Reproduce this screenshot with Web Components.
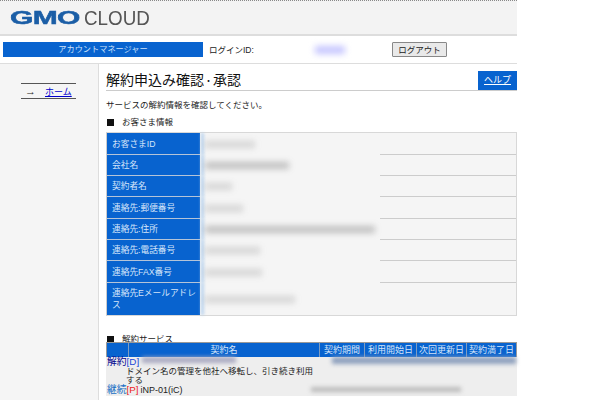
<!DOCTYPE html>
<html lang="ja">
<head>
<meta charset="utf-8">
<title>解約申込み確認・承認</title>
<style>
  html, body { margin: 0; height: 400px; overflow: hidden; background: #fff; }
  body { font: 8.5px/12px "Liberation Sans", "Noto Sans CJK JP", sans-serif; color: #222; }
</style>
</head>
<body>
<site-header></site-header>
<account-bar></account-bar>
<page-body>
  <side-menu slot="side"></side-menu>
  <page-title>解約申込み確認<span style="font-size:9px;vertical-align:1px">・</span>承認</page-title>
  <p style="margin:8px 0 0;height:13px;line-height:13px">サービスの解約情報を確認してください。</p>
  <section-head style="margin-top:4px">お客さま情報</section-head>
  <info-table style="margin-top:4px">
    <info-row label="お客さまID" w="50" h="22"></info-row>
    <info-row label="会社名" w="84" h="21" dark></info-row>
    <info-row label="契約者名" w="27" h="21"></info-row>
    <info-row label="連絡先:郵便番号" w="38" h="22"></info-row>
    <info-row label="連絡先:住所" w="170" h="21" dark></info-row>
    <info-row label="連絡先:電話番号" w="55" h="21"></info-row>
    <info-row label="連絡先FAX番号" w="57" h="22"></info-row>
    <info-row label="連絡先Eメールアドレス" w="90" h="32" last></info-row>
  </info-table>
  <section-head style="margin-top:17px">解約サービス</section-head>
  <service-table></service-table>
</page-body>

<script>
class SiteHeader extends HTMLElement {
  constructor() {
    super()
    this.attachShadow({ mode: 'open' }).innerHTML = `
      <style>
        :host { display: flex; box-sizing: border-box; width: 517px; height: 36px; padding: 1px 0 0 10px;
          align-items: center; background: #f3f3f3; border-top: 1px dotted #888; border-bottom: 2px solid #ddd; }
        .gmo { font: 700 18.5px/1 "Liberation Sans", sans-serif; color: #1b5ea6;
          display: inline-block; width: 74px; transform: scaleX(1.62); transform-origin: left center;
          -webkit-text-stroke: .5px #1b5ea6; letter-spacing: -.4px; }
        .cloud { font: 20px/1 "Liberation Sans", sans-serif; color: #555;
          display: inline-block; transform: scaleX(.94); transform-origin: left center; }
      </style>
      <span class="gmo">GMO</span><span class="cloud">CLOUD</span>`
  }
}

class AccountBar extends HTMLElement {
  constructor() {
    super()
    this.attachShadow({ mode: 'open' }).innerHTML = `
      <style>
        :host { display: flex; box-sizing: border-box; width: 517px; height: 28px; padding-left: 3px;
          align-items: center; border-bottom: 1px solid #ddd; }
        .name { width: 200px; height: 15px; background: #0863cf; color: #cfe2fa; text-align: center; line-height: 15px; font-size: 8.2px; }
        .login { margin-left: 6px; width: 106px; }
        .id { width: 30px; height: 8px; background: #c6c6ff; filter: blur(3px); }
        button { margin-left: 47px; box-sizing: border-box; width: 55px; height: 15px; padding: 0; font: inherit;
          color: #222; line-height: 12px; background: #e9e9e9; border: 1px solid #888; border-radius: 1px; }
      </style>
      <span class="name">アカウントマネージャー</span>
      <span class="login">ログインID:</span>
      <span class="id"></span>
      <button>ログアウト</button>`
  }
}

class PageBody extends HTMLElement {
  constructor() {
    super()
    this.attachShadow({ mode: 'open' }).innerHTML = `
      <style>
        :host { display: flex; width: 517px; height: 336px; }
        aside { box-sizing: border-box; width: 99px; flex: none; background: #f5f5f5; border-right: 1px solid #ddd; }
        main { flex: 1; min-width: 0; padding: 7px 0 0 7px; }
      </style>
      <aside><slot name="side"></slot></aside>
      <main><slot></slot></main>`
  }
}

class SideMenu extends HTMLElement {
  constructor() {
    super()
    this.attachShadow({ mode: 'open' }).innerHTML = `
      <style>
        :host { display: block; box-sizing: border-box; width: 55px; height: 16px; margin: 19px 0 0 21px;
          border-top: 1px solid #555; border-bottom: 1px solid #555; line-height: 14px; white-space: nowrap; font-size: 9px; }
        span { margin: 0 9px 0 4px; font-size: 11px; }
        a { color: #00c; text-decoration: underline; }
      </style>
      <span>→</span><a href="#">ホーム</a>`
  }
}

class PageTitle extends HTMLElement {
  constructor() {
    super()
    this.attachShadow({ mode: 'open' }).innerHTML = `
      <style>
        :host { display: flex; justify-content: space-between; height: 19px; border-bottom: 1px solid #ccc; }
        h1 { margin: 0; font-size: 14px; font-weight: 400; line-height: 18px; color: #111; }
        a { width: 39px; height: 19px; background: #0863cf; color: #fff; text-align: center; line-height: 18px; font-size: 9px; }
      </style>
      <h1><slot></slot></h1>
      <a href="#">ヘルプ</a>`
  }
}

class SectionHead extends HTMLElement {
  constructor() {
    super()
    this.attachShadow({ mode: 'open' }).innerHTML = `
      <style>
        :host { display: flex; align-items: center; height: 12px; gap: 8px; line-height: 12px; }
        i { width: 7px; height: 7px; background: #111; margin-left: 1px; }
      </style>
      <i></i><span><slot></slot></span>`
  }
}

class InfoTable extends HTMLElement {
  constructor() {
    super()
    this.attachShadow({ mode: 'open' }).innerHTML = `
      <style>
        :host { display: block; box-sizing: border-box; width: 411px; border: 1px solid #d8d8d8; border-left-color: #ccc; background: #f5f5f5; }
      </style>
      <slot></slot>`
  }
}

class InfoRow extends HTMLElement {
  constructor() {
    super()
    const h = this.getAttribute('h')
    const w = this.getAttribute('w')
    const last = this.hasAttribute('last')
    const dark = this.hasAttribute('dark') ? .3 : .18
    this.attachShadow({ mode: 'open' }).innerHTML = `
      <style>
        :host { display: flex; height: ${h}px; }
        .label { box-sizing: border-box; width: 93px; flex: none; display: flex; align-items: center; padding: 0 3px 0 5px;
          background: #0863cf; color: #d5e5fa; line-height: 12px; font-size: 8.7px; ${last ? '' : 'border-bottom: 1px solid #b5c4d8;'} }
        .value { flex: 1; position: relative; display: flex; align-items: center; padding-left: 4px;
          ${last ? '' : 'background: linear-gradient(#ccc,#ccc) right bottom / 136px 1px no-repeat;'} }
        .value::before { content: ""; position: absolute; left: 1px; top: 0; bottom: 0; width: 3px; background: #bcd4ee; filter: blur(1.5px); }
        .blur { width: ${w}px; height: 7px; background: rgba(70,70,70,${dark}); filter: blur(3px); margin-left: 1px; }
      </style>
      <div class="label">${this.getAttribute('label')}</div>
      <div class="value"><span class="blur"></span></div>`
  }
}

class ServiceTable extends HTMLElement {
  constructor() {
    super()
    this.attachShadow({ mode: 'open' }).innerHTML = `
      <style>
        :host { display: block; width: 411px; margin-top: -3px; height: 54px; background: #eee; position: relative; }
        .head { display: grid; grid-template-columns: 21px 191px 45px 52px 50px 1fr; height: 15px;
          box-sizing: border-box; border: 1px solid #999; border-bottom: 0; background: #0863cf; font-size: 9px; }
        .head span { color: #d5e5fa; text-align: center; line-height: 14px; border-left: 1px solid #7f9dc0; white-space: nowrap; overflow: hidden; }
        .head span:first-child { border-left: 0; }
        .one { height: 10px; line-height: 10px; font-size: 9.8px; padding-left: 1px; }
        .one .st { color: #00008b; white-space: nowrap; }
        .st em { font-style: normal; color: #1c46d8; }
        .desc { margin: 0 0 0 20px; width: 190px; height: 17px; line-height: 9px; color: #222; }
        .two { display: flex; height: 12px; padding-left: 1px; align-items: center; white-space: nowrap; font-size: 9.8px; }
        .two b { font-weight: 400; color: #1a6fc4; }
        .two em { font-style: normal; color: #e22; }
        .two span { margin-left: 2px; font-size: 9px; }
        .b { position: absolute; filter: blur(2px); }
      </style>
      <div class="head"><span></span><span>契約名</span><span>契約期間</span><span>利用開始日</span><span>次回更新日</span><span>契約満了日</span></div>
      <div class="one"><span class="st">解約<em>[D]</em></span></div>
      <p class="desc">ドメイン名の管理を他社へ移転し、引き続き利用する</p>
      <div class="two"><b>継続</b><em>[P]</em><span>iNP-01(iC)</span></div>
      <i class="b" style="left:36px;top:15px;width:94px;height:6px;background:#a8a8c0"></i>
      <i class="b" style="left:226px;top:15px;width:184px;height:7px;background:#8ea0bd"></i>
      <i class="b" style="left:205px;top:45px;width:150px;height:5px;background:#bbb"></i>`
  }
}

customElements.define('site-header', SiteHeader)
customElements.define('account-bar', AccountBar)
customElements.define('page-body', PageBody)
customElements.define('side-menu', SideMenu)
customElements.define('page-title', PageTitle)
customElements.define('section-head', SectionHead)
customElements.define('info-table', InfoTable)
customElements.define('info-row', InfoRow)
customElements.define('service-table', ServiceTable)
</script>
</body>
</html>
